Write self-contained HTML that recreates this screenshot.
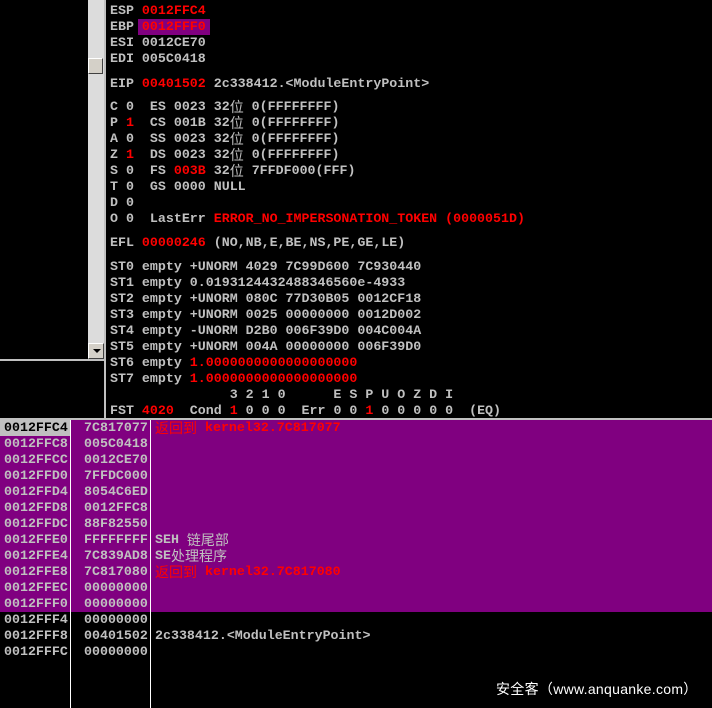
<!DOCTYPE html>
<html><head><meta charset="utf-8"><style>
body{margin:0;width:712px;height:708px;background:#000;position:relative;overflow:hidden;font-family:"Liberation Mono","WenQuanYi Zen Hei",monospace;font-size:13.3px;color:#c0c0c0;font-weight:bold}
.l{position:absolute;white-space:pre;line-height:16px;height:16px;overflow:visible}
.r{color:#f00}
.s,.sr{font-family:"WenQuanYi Zen Hei","Noto Sans CJK SC",sans-serif;font-weight:normal;font-size:14px;display:inline-block;line-height:16px;height:16px;vertical-align:top}
.sr{color:#f00}
</style></head><body>
<div style="position:absolute;left:88px;top:0;width:16px;height:360px;background:#dcdcdc"></div>
<div style="position:absolute;left:88px;top:58px;width:15px;height:16px;background:#d4d0c8;border:1px solid #fff;border-right-color:#404040;border-bottom-color:#404040;box-sizing:border-box"></div>
<div style="position:absolute;left:88px;top:343px;width:16px;height:16px;background:#d4d0c8;border:1px solid #fff;border-right-color:#404040;border-bottom-color:#404040;box-sizing:border-box"><div style="position:absolute;left:4px;top:5px;width:0;height:0;border-left:4px solid transparent;border-right:4px solid transparent;border-top:4px solid #000"></div></div>
<div style="position:absolute;left:0;top:359px;width:104px;height:2px;background:#c0c0c0"></div>
<div style="position:absolute;left:104px;top:0;width:2px;height:418px;background:#c0c0c0"></div>
<div style="position:absolute;left:0;top:418px;width:712px;height:2px;background:#c0c0c0"></div>
<div style="position:absolute;left:0;top:420px;width:712px;height:192px;background:#800080"></div>
<div style="position:absolute;left:0;top:420px;width:70px;height:16px;background:#c0c0c0"></div>
<div style="position:absolute;left:70px;top:420px;width:1px;height:288px;background:#fff"></div>
<div style="position:absolute;left:150px;top:420px;width:1px;height:288px;background:#fff"></div>
<div style="position:absolute;left:138px;top:19px;width:72px;height:16px;background:#800080"></div>

<div class="l" style="left:110px;top:3px">ESP <span class="r">0012FFC4</span></div>
<div class="l" style="left:110px;top:19px">EBP <span class="r">0012FFF0</span></div>
<div class="l" style="left:110px;top:35px">ESI 0012CE70</div>
<div class="l" style="left:110px;top:51px">EDI 005C0418</div>
<div class="l" style="left:110px;top:76px">EIP <span class="r">00401502</span> 2c338412.&lt;ModuleEntryPoint&gt;</div>
<div class="l" style="left:110px;top:99px">C 0  ES 0023 32<span class="s">位</span> 0(FFFFFFFF)</div>
<div class="l" style="left:110px;top:115px">P <span class="r">1</span>  CS 001B 32<span class="s">位</span> 0(FFFFFFFF)</div>
<div class="l" style="left:110px;top:131px">A 0  SS 0023 32<span class="s">位</span> 0(FFFFFFFF)</div>
<div class="l" style="left:110px;top:147px">Z <span class="r">1</span>  DS 0023 32<span class="s">位</span> 0(FFFFFFFF)</div>
<div class="l" style="left:110px;top:163px">S 0  FS <span class="r">003B</span> 32<span class="s">位</span> 7FFDF000(FFF)</div>
<div class="l" style="left:110px;top:179px">T 0  GS 0000 NULL</div>
<div class="l" style="left:110px;top:195px">D 0</div>
<div class="l" style="left:110px;top:211px">O 0  LastErr <span class="r">ERROR_NO_IMPERSONATION_TOKEN (0000051D)</span></div>
<div class="l" style="left:110px;top:235px">EFL <span class="r">00000246</span> (NO,NB,E,BE,NS,PE,GE,LE)</div>
<div class="l" style="left:110px;top:259px">ST0 empty +UNORM 4029 7C99D600 7C930440</div>
<div class="l" style="left:110px;top:275px">ST1 empty 0.0193124432488346560e-4933</div>
<div class="l" style="left:110px;top:291px">ST2 empty +UNORM 080C 77D30B05 0012CF18</div>
<div class="l" style="left:110px;top:307px">ST3 empty +UNORM 0025 00000000 0012D002</div>
<div class="l" style="left:110px;top:323px">ST4 empty -UNORM D2B0 006F39D0 004C004A</div>
<div class="l" style="left:110px;top:339px">ST5 empty +UNORM 004A 00000000 006F39D0</div>
<div class="l" style="left:110px;top:355px">ST6 empty <span class="r">1.0000000000000000000</span></div>
<div class="l" style="left:110px;top:371px">ST7 empty <span class="r">1.0000000000000000000</span></div>
<div class="l" style="left:110px;top:387px">               3 2 1 0      E S P U O Z D I</div>
<div class="l" style="left:110px;top:403px">FST <span class="r">4020</span>  Cond <span class="r">1</span> 0 0 0  Err 0 0 <span class="r">1</span> 0 0 0 0 0  (EQ)</div>

<div class="l" style="left:4px;top:420px;color:#000">0012FFC4</div>
<div class="l" style="left:84px;top:420px">7C817077</div>
<div class="l" style="left:155px;top:420px"><span class="sr">返回到</span> <span class="r">kernel32.7C817077</span></div>
<div class="l" style="left:4px;top:436px">0012FFC8</div><div class="l" style="left:84px;top:436px">005C0418</div>
<div class="l" style="left:4px;top:452px">0012FFCC</div><div class="l" style="left:84px;top:452px">0012CE70</div>
<div class="l" style="left:4px;top:468px">0012FFD0</div><div class="l" style="left:84px;top:468px">7FFDC000</div>
<div class="l" style="left:4px;top:484px">0012FFD4</div><div class="l" style="left:84px;top:484px">8054C6ED</div>
<div class="l" style="left:4px;top:500px">0012FFD8</div><div class="l" style="left:84px;top:500px">0012FFC8</div>
<div class="l" style="left:4px;top:516px">0012FFDC</div><div class="l" style="left:84px;top:516px">88F82550</div>
<div class="l" style="left:4px;top:532px">0012FFE0</div><div class="l" style="left:84px;top:532px">FFFFFFFF</div>
<div class="l" style="left:155px;top:532px">SEH <span class="s">链尾部</span></div>
<div class="l" style="left:4px;top:548px">0012FFE4</div><div class="l" style="left:84px;top:548px">7C839AD8</div>
<div class="l" style="left:155px;top:548px">SE<span class="s">处理程序</span></div>
<div class="l" style="left:4px;top:564px">0012FFE8</div><div class="l" style="left:84px;top:564px">7C817080</div>
<div class="l" style="left:155px;top:564px"><span class="sr">返回到</span> <span class="r">kernel32.7C817080</span></div>
<div class="l" style="left:4px;top:580px">0012FFEC</div><div class="l" style="left:84px;top:580px">00000000</div>
<div class="l" style="left:4px;top:596px">0012FFF0</div><div class="l" style="left:84px;top:596px">00000000</div>
<div class="l" style="left:4px;top:612px">0012FFF4</div><div class="l" style="left:84px;top:612px">00000000</div>
<div class="l" style="left:4px;top:628px">0012FFF8</div><div class="l" style="left:84px;top:628px">00401502</div>
<div class="l" style="left:155px;top:628px">2c338412.&lt;ModuleEntryPoint&gt;</div>
<div class="l" style="left:4px;top:644px">0012FFFC</div><div class="l" style="left:84px;top:644px">00000000</div>

<div style="position:absolute;left:496px;top:679px;color:#fff;font-family:'Liberation Sans','Noto Sans CJK SC',sans-serif;font-size:14px;font-weight:normal;white-space:nowrap;letter-spacing:0.3px">安全客（www.anquanke.com）</div>
</body></html>
